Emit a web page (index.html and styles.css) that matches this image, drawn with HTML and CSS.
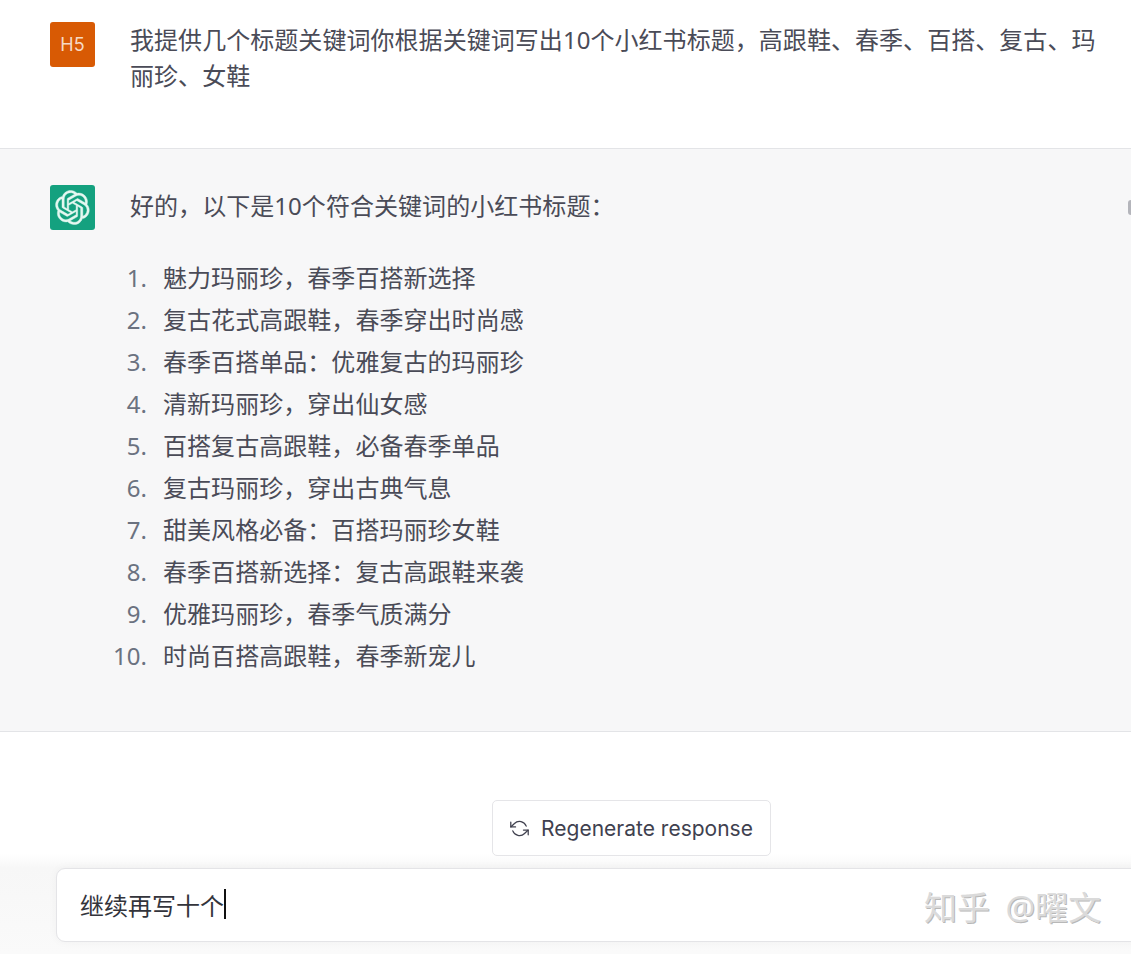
FILE: index.html
```html
<!DOCTYPE html>
<html lang="zh-CN">
<head>
<meta charset="utf-8">
<title>Chat</title>
<link rel="stylesheet" href="styles.css">
</head>
<body>
<div class="page">
  <section class="row row-user">
    <div class="avatar avatar-user">H5</div>
    <div class="msg">我提供几个标题关键词你根据关键词写出10个小红书标题，高跟鞋、春季、百搭、复古、玛丽珍、女鞋</div>
  </section>
  <section class="row row-bot">
    <div class="avatar avatar-bot">
      <svg viewBox="0 0 41 41" width="35" height="35" aria-hidden="true"><path fill="currentColor" stroke="currentColor" stroke-width="0.5" d="M37.5324 16.8707C37.9808 15.5241 38.1363 14.0974 37.9886 12.6859C37.8409 11.2744 37.3934 9.91076 36.676 8.68622C35.6126 6.83404 33.9882 5.3676 32.0373 4.4985C30.0864 3.62941 27.9098 3.40259 25.8215 3.85078C24.8796 2.7893 23.7219 1.94125 22.4257 1.36341C21.1295 0.785575 19.7249 0.491269 18.3058 0.500197C16.1708 0.495044 14.0893 1.16803 12.3614 2.42214C10.6335 3.67624 9.34853 5.44666 8.6917 7.47815C7.30085 7.76286 5.98686 8.3414 4.8377 9.17505C3.68854 10.0087 2.73073 11.0782 2.02839 12.312C0.956464 14.1591 0.498905 16.2988 0.721698 18.4228C0.944492 20.5467 1.83612 22.5449 3.268 24.1293C2.81966 25.4759 2.66413 26.9026 2.81182 28.3141C2.95951 29.7256 3.40701 31.0892 4.12437 32.3138C5.18791 34.1659 6.8123 35.6322 8.76321 36.5013C10.7141 37.3704 12.8907 37.5973 14.9789 37.1492C15.9208 38.2107 17.0786 39.0587 18.3747 39.6366C19.6709 40.2144 21.0755 40.5087 22.4946 40.4998C24.6307 40.5054 26.7133 39.8321 28.4418 38.5772C30.1704 37.3223 31.4556 35.5506 32.1119 33.5179C33.5027 33.2332 34.8167 32.6547 35.9659 31.821C37.115 30.9874 38.0728 29.9178 38.7752 28.684C39.8458 26.8371 40.3023 24.6979 40.0789 22.5748C39.8556 20.4517 38.9639 18.4544 37.5324 16.8707ZM22.4978 37.8849C20.7443 37.8874 19.0459 37.2733 17.6994 36.1501C17.7601 36.117 17.8666 36.0586 17.936 36.0161L25.9004 31.4156C26.1003 31.3019 26.2663 31.137 26.3813 30.9378C26.4964 30.7386 26.5563 30.5124 26.5549 30.2825V19.0542L29.9213 20.998C29.9389 21.0068 29.9541 21.0198 29.9656 21.0359C29.977 21.052 29.9842 21.0707 29.9867 21.0902V30.3889C29.9842 32.375 29.1946 34.2791 27.7909 35.6841C26.3872 37.0892 24.4838 37.8806 22.4978 37.8849ZM6.39227 31.0064C5.51397 29.4888 5.19742 27.7107 5.49804 25.9832C5.55718 26.0187 5.66048 26.0818 5.73461 26.1244L13.699 30.7248C13.8975 30.8408 14.1233 30.902 14.3532 30.902C14.583 30.902 14.8088 30.8408 15.0073 30.7248L24.731 25.1103V28.9979C24.7321 29.0177 24.7283 29.0376 24.7199 29.0556C24.7115 29.0736 24.6988 29.0893 24.6829 29.1012L16.6317 33.7497C14.9096 34.7416 12.8643 35.0097 10.9447 34.4954C9.02506 33.9811 7.38785 32.7263 6.39227 31.0064ZM4.29707 13.6194C5.17156 12.0998 6.55279 10.9364 8.19885 10.3327C8.19885 10.4013 8.19491 10.5228 8.19491 10.6071V19.808C8.19351 20.0378 8.25334 20.2638 8.36823 20.4629C8.48312 20.6619 8.64893 20.8267 8.84863 20.9404L18.5723 26.5542L15.206 28.4979C15.1894 28.5089 15.1703 28.5155 15.1505 28.5173C15.1307 28.5191 15.1107 28.516 15.0924 28.5082L7.04046 23.8557C5.32135 22.8601 4.06716 21.2235 3.55289 19.3046C3.03862 17.3858 3.30624 15.3413 4.29707 13.6194ZM31.955 20.0556L22.2312 14.4411L25.5976 12.4981C25.6142 12.4872 25.6333 12.4805 25.6531 12.4787C25.6729 12.4769 25.6928 12.4801 25.7111 12.4879L33.7631 17.1364C34.9967 17.849 36.0017 18.8982 36.6606 20.1613C37.3194 21.4244 37.6047 22.849 37.4832 24.2684C37.3617 25.6878 36.8382 27.0432 35.9743 28.1759C35.1103 29.3086 33.9415 30.1717 32.6047 30.6641C32.6047 30.5947 32.6047 30.4733 32.6047 30.3889V21.188C32.6066 20.9586 32.5474 20.7328 32.4332 20.5338C32.319 20.3348 32.154 20.1698 31.955 20.0556ZM35.3055 15.0128C35.2464 14.9765 35.1431 14.9142 35.069 14.8717L27.1045 10.2712C26.906 10.1554 26.6803 10.0943 26.4504 10.0943C26.2206 10.0943 25.9948 10.1554 25.7963 10.2712L16.0726 15.8858V11.9982C16.0715 11.9783 16.0753 11.9585 16.0837 11.9405C16.0921 11.9225 16.1048 11.9068 16.1207 11.8949L24.1719 7.25025C25.4053 6.53903 26.8158 6.19376 28.2383 6.25482C29.6608 6.31589 31.0364 6.78077 32.2044 7.59508C33.3723 8.40939 34.2842 9.53945 34.8334 10.8531C35.3826 12.1667 35.5464 13.6095 35.3055 15.0128ZM14.2424 21.9419L10.8752 19.9981C10.8576 19.9893 10.8423 19.9763 10.8309 19.9602C10.8195 19.9441 10.8122 19.9254 10.8098 19.9058V10.6071C10.8107 9.18295 11.2173 7.78848 11.9819 6.58696C12.7466 5.38544 13.8377 4.42659 15.1275 3.82264C16.4173 3.21869 17.8524 2.99464 19.2649 3.1767C20.6775 3.35876 22.0089 3.93941 23.1034 4.85067C23.0427 4.88379 22.937 4.94215 22.8668 4.98473L14.9024 9.58517C14.7025 9.69878 14.5366 9.86356 14.4215 10.0626C14.3065 10.2616 14.2466 10.4877 14.2479 10.7175L14.2424 21.9419ZM16.071 17.9991L20.4018 15.4978L24.7325 17.9975V22.9985L20.4018 25.4983L16.071 22.9985V17.9991Z"/></svg>
    </div>
    <div class="msg">
      <p class="intro">好的，以下是10个符合关键词的小红书标题：</p>
      <ol class="titles">
        <li>魅力玛丽珍，春季百搭新选择</li>
        <li>复古花式高跟鞋，春季穿出时尚感</li>
        <li>春季百搭单品：优雅复古的玛丽珍</li>
        <li>清新玛丽珍，穿出仙女感</li>
        <li>百搭复古高跟鞋，必备春季单品</li>
        <li>复古玛丽珍，穿出古典气息</li>
        <li>甜美风格必备：百搭玛丽珍女鞋</li>
        <li>春季百搭新选择：复古高跟鞋来袭</li>
        <li>优雅玛丽珍，春季气质满分</li>
        <li>时尚百搭高跟鞋，春季新宠儿</li>
      </ol>
    </div>
    <span class="scroll-mark"></span>
  </section>
  <footer class="composer">
    <button class="regen" type="button">
      <svg viewBox="0 0 24 24" width="19" height="19" fill="none" stroke="currentColor" stroke-width="1.6" stroke-linecap="round" stroke-linejoin="round" aria-hidden="true"><polyline points="1 4 1 10 7 10"/><polyline points="23 20 23 14 17 14"/><path d="M20.49 9A9 9 0 0 0 5.64 5.64L1 10m22 4l-4.64 4.36A9 9 0 0 1 3.51 15"/></svg>
      <span>Regenerate response</span>
    </button>
    <div class="input">
      <span class="typed">继续再写十个</span><span class="caret"></span>
      <span class="watermark">知乎 @曜文</span>
    </div>
  </footer>
</div>
</body>
</html>
```

FILE: styles.css
```css
* { box-sizing: border-box; }
html, body { margin: 0; padding: 0; height: 100%; overflow: hidden; background: #fff; }
.page {
  width: 1263px;
  height: 954px;
  font-family: "Noto Sans", "Noto Sans CJK SC", sans-serif;
  color: #374151;
  display: flex;
  flex-direction: column;
}
.row { display: flex; gap: 35px; padding-left: 50px; position: relative; border-bottom: 1px solid #e3e4e7; }
.row-user { height: 149px; padding-top: 22px; background: #fff; }
.row-bot { height: 583px; padding-top: 36px; background: #f7f7f8; }
.avatar {
  flex: none;
  width: 45px;
  height: 45px;
  border-radius: 3px;
  display: flex;
  align-items: center;
  justify-content: center;
}
.avatar-user { background: #d85a04; color: #f6d9c4; font-family: Inter, sans-serif; font-size: 18px; }
.avatar-bot { background: #14a17f; color: #e4f8f1; }
.msg { width: 970px; font-size: 24px; line-height: 36px; letter-spacing: 0.05px; color: #4a4b57; }
.intro { margin: 3px 0 0; }
.titles { margin: 33px 0 0 -17px; padding: 0; line-height: 42px; list-style: none; counter-reset: title; }
.titles li { display: flex; gap: 16px; counter-increment: title; }
.titles li::before {
  content: counter(title) ".";
  flex: none;
  width: 34px;
  text-align: right;
  color: #6b7280;
}
.scroll-mark {
  position: absolute;
  left: 1128px;
  top: 51px;
  width: 6px;
  height: 15px;
  border-radius: 3px;
  background: #b4b5bb;
}
.composer {
  flex: 1;
  display: flex;
  flex-direction: column;
  align-items: center;
  padding: 68px 56px 0;
  background: linear-gradient(to bottom, #fff 0, #fff 122px, #f7f7f7 136px, #fafafa 100%);
}
.regen {
  width: 279px;
  height: 56px;
  display: flex;
  align-items: center;
  justify-content: center;
  gap: 12px;
  background: #fff;
  border: 1px solid #e5e5e8;
  border-radius: 5px;
  font-family: Inter, sans-serif;
  font-size: 21px;
  color: #40414f;
  padding: 0;
}
.input {
  position: relative;
  width: 100%;
  height: 74px;
  margin-top: 12px;
  padding: 0 0 2px 23px;
  display: flex;
  align-items: center;
  background: #fff;
  border: 1px solid #e4e4e7;
  border-radius: 9px;
  box-shadow: 0 0 10px rgba(0, 0, 0, 0.04);
  font-size: 24px;
  color: #33343b;
}
.caret { width: 1.5px; height: 30px; background: #111; }
.watermark {
  position: absolute;
  left: 867px;
  top: 17px;
  font-size: 33px;
  line-height: 44px;
  word-spacing: 7px;
  white-space: nowrap;
  color: #dadada;
  text-shadow: -1px -1px 0 #fff, 1px 1px 0 #b8b8b8;
}
```
